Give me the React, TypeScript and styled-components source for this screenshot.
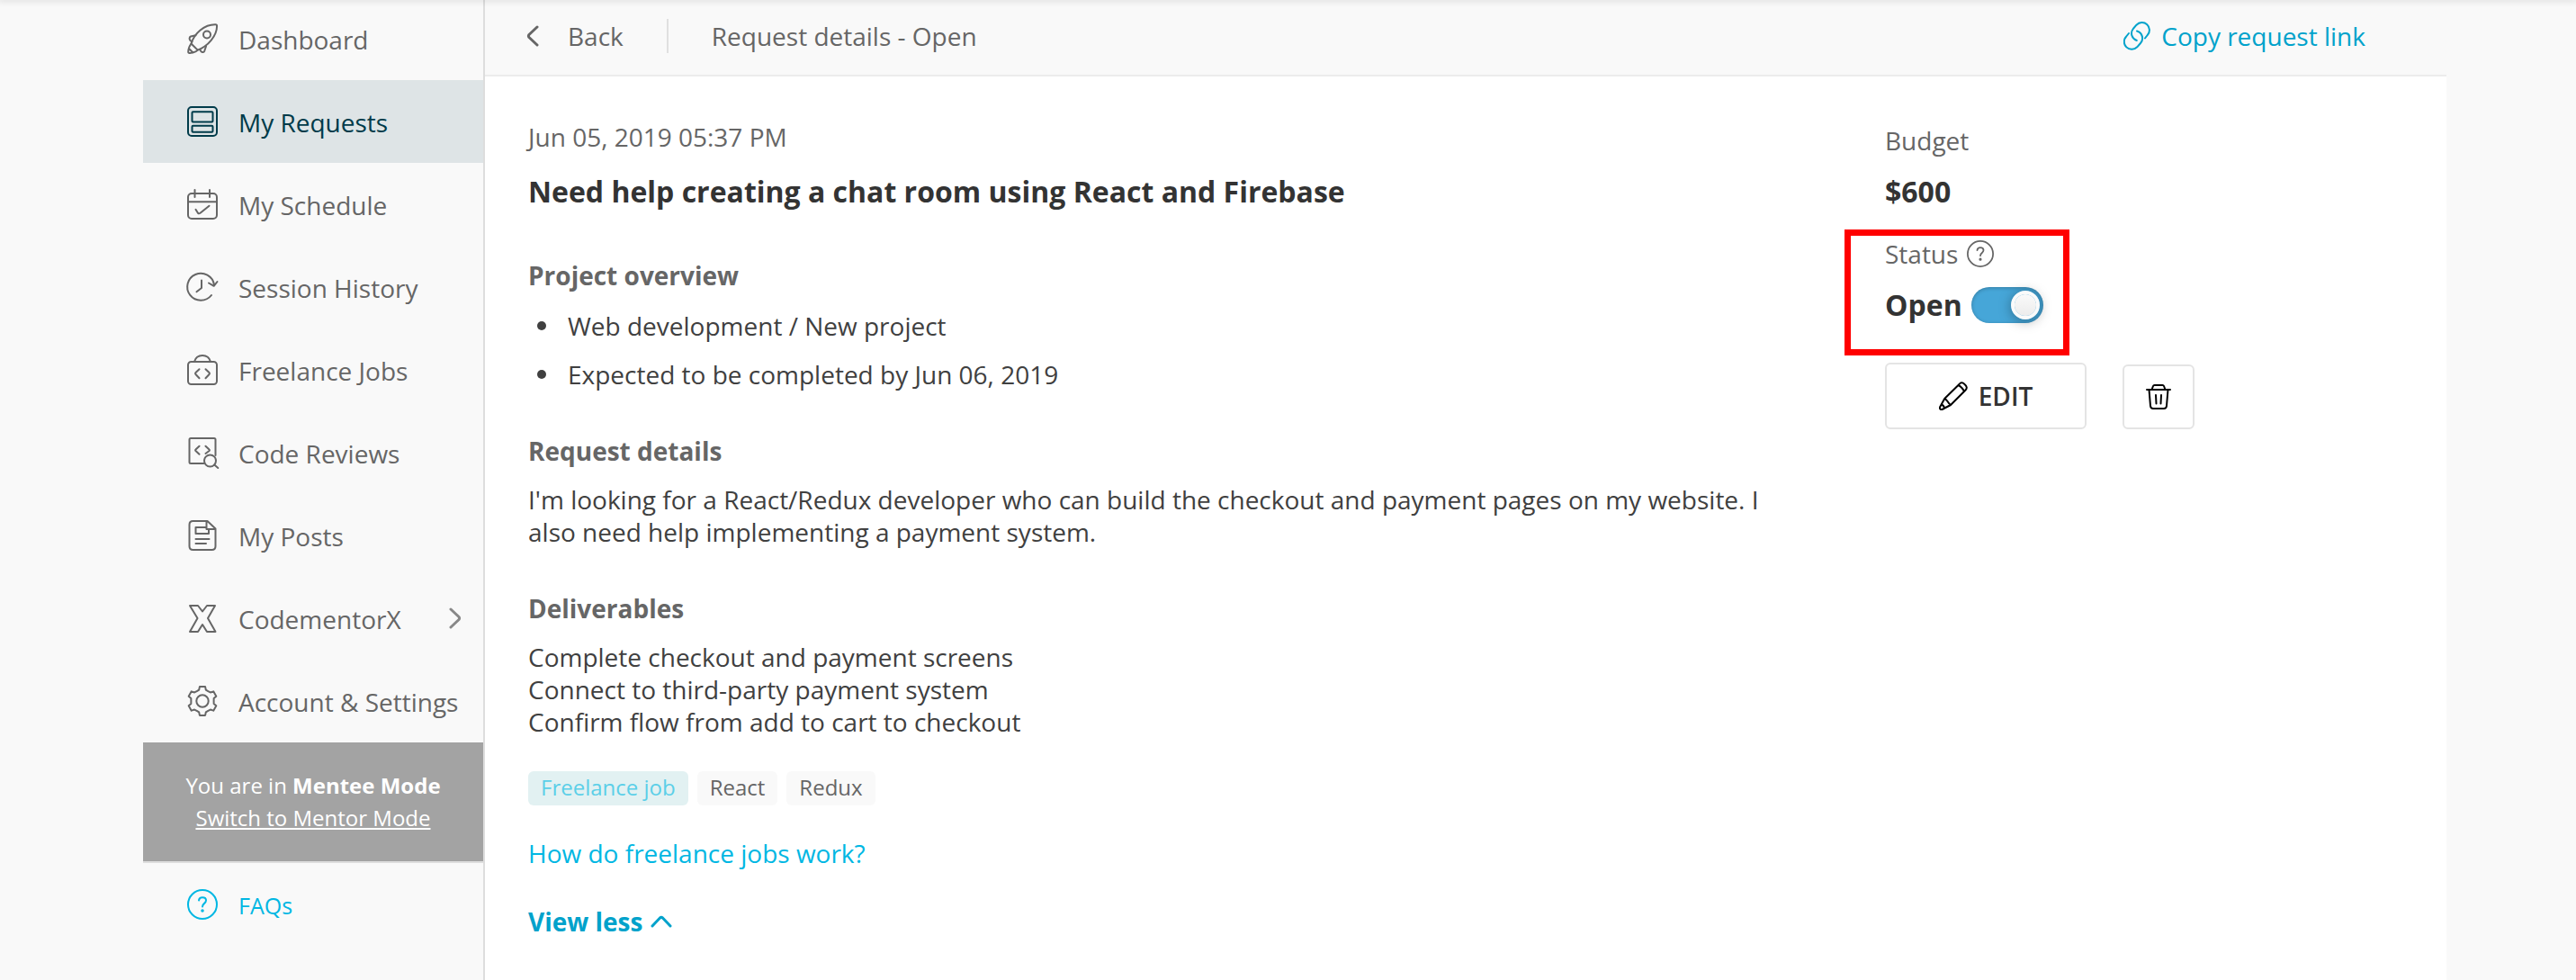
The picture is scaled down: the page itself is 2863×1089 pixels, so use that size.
import React, { useState } from "react";
import styled, { createGlobalStyle, css } from "styled-components";

const color = {
  page: "#f9f9f9",
  line: "#dddddd",
  softLine: "#ececec",
  text: "#666666",
  body: "#404040",
  strong: "#333333",
  active: "#003b4a",
  activeBg: "#dee4e6",
  link: "#00a2cb",
  brightLink: "#00b7e3",
};

const GlobalStyle = createGlobalStyle`
  *, *::before, *::after { box-sizing: border-box; }
  body {
    margin: 0;
    background: ${color.page};
    color: ${color.text};
    font-family: "Open Sans", "Noto Sans", sans-serif;
    font-size: 28px;
    line-height: 36px;
  }
  h1, h2, p, ul { margin: 0; padding: 0; }
  a { text-decoration: none; color: inherit; }
  button { font: inherit; color: inherit; background: none; border: 0; padding: 0; cursor: pointer; }
`;

const Page = styled.div`
  min-height: 100vh;
  padding: 0 0 0 15px;
`;

const TopShadow = styled.div`
  position: fixed;
  top: 0;
  left: 0;
  right: 0;
  height: 0;
  box-shadow: 0 0 6px 2px rgba(0, 0, 0, 0.12);
  z-index: 2;
`;

const Shell = styled.div`
  display: grid;
  grid-template-columns: 380px minmax(0, 1fr);
  max-width: 2560px;
  min-height: 100vh;
  margin: 0 auto;
`;

const Sidebar = styled.aside`
  display: flex;
  flex-direction: column;
  border-right: 2px solid ${color.line};
`;

const Nav = styled.nav`
  display: flex;
  flex-direction: column;
  margin-top: -3px;
`;

const NavItem = styled.a<{ $active?: boolean; $help?: boolean }>`
  display: flex;
  align-items: center;
  gap: 23px;
  height: 92px;
  padding: 0 24px 0 49px;
  white-space: nowrap;
  ${(p) => p.$active && css`
    background: ${color.activeBg};
    color: ${color.active};
  `}
  ${(p) => p.$help && css`
    color: ${color.brightLink};
    font-size: 25px;
  `}
`;

const NavLabel = styled.span`
  padding-top: 2px;
`;

const NavChevron = styled.span`
  display: flex;
  margin-left: auto;
  color: #888888;
`;

const ModeBanner = styled.div`
  padding: 30px 16px;
  background: #a3a3a3;
  color: #ffffff;
  font-size: 24px;
  text-align: center;
`;

const ModeLink = styled.a`
  text-decoration: underline;
  text-decoration-thickness: 2px;
  text-underline-offset: 2px;
  text-decoration-skip-ink: none;
`;

const Help = styled.div`
  border-top: 2px solid ${color.line};
`;

const Main = styled.main`
  display: flex;
  flex-direction: column;
  background: #ffffff;
`;

const Toolbar = styled.header`
  display: flex;
  align-items: center;
  height: 85px;
  padding: 0 90px 3px 46px;
  background: ${color.page};
  border-bottom: 2px solid ${color.softLine};
`;

const BackButton = styled.button`
  display: flex;
  align-items: center;
  gap: 32px;
`;

const Divider = styled.span`
  width: 2px;
  height: 38px;
  margin: 0 48px;
  background: #e0e0e0;
`;

const CopyButton = styled.button`
  display: flex;
  align-items: center;
  gap: 12px;
  margin-left: auto;
  color: ${color.link};
`;

const Content = styled.div`
  display: grid;
  grid-template-columns: minmax(0, 1fr) 576px;
  gap: 120px;
  padding: 49px 48px;
`;

const Details = styled.article`
  display: flex;
  flex-direction: column;
  align-items: flex-start;
`;

const Title = styled.h1`
  margin: 21px 0 4px;
  color: ${color.strong};
  font-size: 32px;
  line-height: 44px;
`;

const Section = styled.section`
  margin-top: 49px;
  color: ${color.body};
`;

const SectionTitle = styled.h2`
  margin-bottom: 18px;
  color: ${color.text};
  font-size: 28px;
`;

const Bullets = styled.ul`
  display: flex;
  flex-direction: column;
  gap: 18px;
  padding: 2px 0 0 10px;
  list-style: none;
`;

const Bullet = styled.li`
  display: flex;
  align-items: center;
  gap: 24px;

  &::before {
    content: "";
    width: 10px;
    height: 10px;
    border-radius: 50%;
    background: currentColor;
  }
`;

const Tags = styled.div`
  display: flex;
  gap: 10px;
  margin-top: 37px;
`;

const Tag = styled.span<{ $accent?: boolean }>`
  height: 38px;
  padding: 0 14px;
  border-radius: 6px;
  background: ${(p) => (p.$accent ? "#e2f1f2" : color.page)};
  color: ${(p) => (p.$accent ? "#5bcfe8" : color.text)};
  font-size: 24px;
`;

const HelpLink = styled.a`
  margin-top: 35px;
  color: ${color.brightLink};
`;

const ViewLess = styled.button`
  display: flex;
  align-items: center;
  gap: 9px;
  margin-top: 40px;
  color: ${color.link};
  font-weight: 700;
`;

const Summary = styled.aside`
  display: flex;
  flex-direction: column;
  padding-top: 4px;
`;

const Caption = styled.div`
  display: flex;
  align-items: center;
  gap: 10px;
`;

const Value = styled.div`
  display: flex;
  align-items: center;
  gap: 10px;
  margin-top: 17px;
  color: ${color.strong};
  font-size: 32px;
  font-weight: 700;
  line-height: 44px;
`;

const StatusBlock = styled.div`
  position: relative;
  margin-top: 29px;
`;

const Highlight = styled.div`
  position: absolute;
  top: -9px;
  left: -45px;
  width: 250px;
  height: 140px;
  border: 7px solid #ff0000;
  pointer-events: none;
`;

const Switch = styled.input`
  appearance: none;
  width: 80px;
  height: 40px;
  margin: 0;
  padding: 4px;
  border-radius: 20px;
  background: #c4c4c4;
  box-shadow: inset 0 1px 4px rgba(0, 0, 0, 0.25);
  cursor: pointer;

  &::before {
    content: "";
    display: block;
    width: 32px;
    height: 32px;
    border: 4px solid #fafafa;
    border-radius: 50%;
    background: linear-gradient(#fafafa, #ececec) padding-box;
    box-shadow: 0 2px 14px rgba(0, 0, 0, 0.35);
  }

  &:checked {
    background: #46a6d8;
  }

  &:checked::before {
    margin-left: 40px;
  }
`;

const Actions = styled.div`
  display: flex;
  align-items: flex-end;
  gap: 40px;
  margin-top: 42px;
`;

const ActionButton = styled.button<{ $compact?: boolean }>`
  display: flex;
  align-items: center;
  justify-content: center;
  gap: 12px;
  width: ${(p) => (p.$compact ? 80 : 224)}px;
  height: ${(p) => (p.$compact ? 72 : 74)}px;
  border: 2px solid #e4e4e4;
  border-radius: 6px;
  background: #ffffff;
  color: ${color.strong};
  font-weight: 600;
`;

const Glyph = styled.svg<{ $tone?: string; $weight?: number }>`
  display: block;
  flex: none;
  fill: none;
  stroke: ${(p) => p.$tone ?? "currentColor"};
  stroke-width: ${(p) => p.$weight ?? 2};
  stroke-linecap: round;
  stroke-linejoin: round;
`;

type IconName =
  | "rocket" | "requests" | "schedule" | "history" | "jobs"
  | "reviews" | "posts" | "codementorx" | "settings" | "help";

/* Six-toothed cog outline around (17, 17). */
function cogPath() {
  const at = (r: number, deg: number) => {
    const a = (deg * Math.PI) / 180;
    return `${(17 + r * Math.cos(a)).toFixed(2)} ${(17 + r * Math.sin(a)).toFixed(2)}`;
  };
  const points: string[] = [];
  for (let i = 0; i < 6; i++) {
    const a = -90 + i * 60;
    points.push(at(13, a - 17), at(16.2, a - 11), at(16.2, a + 11), at(13, a + 17), at(12.6, a + 30));
  }
  return `M${points.join("L")}Z`;
}

const drawings: Record<IconName, React.ReactNode> = {
  rocket: (
    <>
      <path d="M4.5 22.5C8 11 19 1 31.5 1.2c1.3 0 1.6.6 1.6 1.8C33 14 23 25.5 11.7 29.6Z" />
      <circle cx="22" cy="12.5" r="4" />
      <path d="M9.5 13.2 4 14.5c-1.5.6-2 3-.5 4.5l2 1.5M21 25.5l-1.8 5.3c-.6 1.5-2.6 1.7-3.7.4L14 29M4.5 22.5C2.5 25 1.3 28.5 1.2 31.5c0 1.3.6 1.7 1.8 1.5 3.5-.3 6.5-1.2 8.7-3.4M2.500 28.500l4 4" />
    </>
  ),
  requests: (
    <>
      <rect x="1" y="1" width="32" height="32" rx="4" />
      <rect x="5.5" y="6.3" width="23" height="11.2" rx="1" />
      <rect x="5.5" y="21.7" width="23" height="7" rx="1" />
    </>
  ),
  schedule: (
    <>
      <rect x="1" y="5" width="32" height="28" rx="4" />
      <path d="M1 14.2h32M8.5 1v8M25 1v8M9.5 22.8l2.5 4c.8.8 1.7.6 2.5 0L24.5 18.7" />
    </>
  ),
  history: (
    <path d="M30 14.5A15 15 0 1 0 27 26M24 12.5l5.7 3.3L33.5 11M16 9.5V18l-5.5 4.3" />
  ),
  jobs: (
    <>
      <rect x="1" y="8" width="32" height="25" rx="3.5" />
      <path d="M8 8C10.5-1.3 23.5-1.3 26 8M13.5 16.2 9.5 20q-1 1 0 2l4 4.2M20.5 16.2l4 3.8q1 1 0 2l-4 4.2" />
    </>
  ),
  reviews: (
    <>
      <path d="M18.5 29H4q-1.5 0-1.5-1.5v-25Q2.5 1 4 1h26q1.5 0 1.5 1.5V20M13.5 9.7 9.5 13.5q-.8.7 0 1.5l4 3.8M20.5 9.7l4 3.8q.8.7 0 1.5l-4 3" />
      <circle cx="25.5" cy="26" r="6.5" />
      <path d="m30.3 30.5 4 3.5" />
    </>
  ),
  posts: (
    <path d="M22.5 1H6.5Q2.5 1 2.5 5v24q0 4 4 4h21q4 0 4-4V9.5ZM21.5 1v9h10M21.5 8h-12v7H24v-5M9.5 21h15M9.5 26H21" />
  ),
  codementorx: (
    <path d="M3 3h9l5 6.5L22 3h9l-8 14 8.5 15H22l-5-8-5 8H3l8.5-15Z" />
  ),
  settings: (
    <>
      <path d={cogPath()} />
      <circle cx="17" cy="17" r="6.7" />
    </>
  ),
  help: (
    <>
      <circle cx="17" cy="17" r="16" />
      <path d="M13 12.5c.3-2.3 2-3.3 4-3.3 2.3 0 4 1.3 4 3.4 0 3.4-4 3.2-4 6.9" />
      <circle cx="17" cy="24" r=".8" fill="currentColor" />
    </>
  ),
};

const Icon = ({ name, size = 34 }: { name: IconName; size?: number }) => (
  <Glyph width={size} height={size} viewBox="0 0 34 34" overflow="visible" aria-hidden="true">
    {drawings[name]}
  </Glyph>
);

const ChevronLeft = () => (
  <Glyph width="14" height="24" viewBox="0 0 14 24" aria-hidden="true" $weight={3}>
    <path d="M12 2 3 10.5q-1.2 1.5 0 3l9 8.5" />
  </Glyph>
);

const ChevronRight = () => (
  <Glyph width="14" height="24" viewBox="0 0 14 24" aria-hidden="true" $weight={3}>
    <path d="m2 2 9 8.500q1.200 1.500 0 3L2 22" />
  </Glyph>
);

const ChevronUp = ({ flipped }: { flipped: boolean }) => (
  <Glyph width="24" height="14" viewBox="0 0 24 14" aria-hidden="true" $weight={3}>
    <path d={flipped ? "m2 2 8.5 9q1.500 1.200 3 0L22 2" : "m2 12 8.5-9q1.500-1.200 3 0l8.5 9"} />
  </Glyph>
);

const LinkIcon = () => (
  <Glyph width="30" height="32" viewBox="0 0 30 32" aria-hidden="true">
    <path d="M24 18.5 26.7 15A8.3 8.3 0 0 0 14.5 3.7L10.8 8A8.3 8.3 0 0 0 14.8 21" />
    <path d="M6 13 3.2 16.5A8.3 8.3 0 0 0 15.2 28.3L19 24A8.3 8.3 0 0 0 15 10.5" />
  </Glyph>
);

const PencilIcon = () => (
  <Glyph width="32" height="32" viewBox="0 0 32 32" $tone="#000000" aria-hidden="true">
    <path d="M6.2 19 22.5 3Q25-.3 28.5 3q4 3.5 1 6.5L13 26 3.5 31Q.5 31.5 1 28.5ZM6.2 19q2 1 3.3 3 1.5 2.5 3.5 4M21.5 4q2.5 1.3 3.7 2.8 1.6 1.7 2.8 4.2M3 25.5q2 1 3.3 3.7" />
  </Glyph>
);

const TrashIcon = () => (
  <Glyph width="28" height="28" viewBox="0 0 28 28" $tone="#000000" aria-hidden="true">
    <path d="M1 6h26M6.5 6 8 2q.4-1 1.5-1h9q1.1 0 1.5 1l1.5 4M3.5 6l1.5 18q.3 3 3 3h12q2.7 0 3-3L24.5 6M11 12l.5 9.5M17 12l-.5 9.5" />
  </Glyph>
);

const navItems: { label: string; icon: IconName; active?: boolean; more?: boolean }[] = [
  { label: "Dashboard", icon: "rocket" },
  { label: "My Requests", icon: "requests", active: true },
  { label: "My Schedule", icon: "schedule" },
  { label: "Session History", icon: "history" },
  { label: "Freelance Jobs", icon: "jobs" },
  { label: "Code Reviews", icon: "reviews" },
  { label: "My Posts", icon: "posts" },
  { label: "CodementorX", icon: "codementorx", more: true },
  { label: "Account & Settings", icon: "settings" },
];

export default function App() {
  const [open, setOpen] = useState(true);
  const [expanded, setExpanded] = useState(true);

  return (
    <Page>
      <GlobalStyle />
      <TopShadow />
      <Shell>
        <Sidebar>
          <Nav aria-label="Account">
            {navItems.map((item) => (
              <NavItem key={item.label} href="#" $active={item.active} aria-current={item.active ? "page" : undefined}>
                <Icon name={item.icon} />
                <NavLabel>{item.label}</NavLabel>
                {item.more && <NavChevron><ChevronRight /></NavChevron>}
              </NavItem>
            ))}
          </Nav>
          <ModeBanner>
            <div>You are in <strong>Mentee Mode</strong></div>
            <ModeLink href="#">Switch to Mentor Mode</ModeLink>
          </ModeBanner>
          <Help>
            <NavItem href="#" $help>
              <Icon name="help" />
              <NavLabel>FAQs</NavLabel>
            </NavItem>
          </Help>
        </Sidebar>

        <Main>
          <Toolbar>
            <BackButton type="button"><ChevronLeft />Back</BackButton>
            <Divider />
            <span>Request details - Open</span>
            <CopyButton type="button"><LinkIcon />Copy request link</CopyButton>
          </Toolbar>

          <Content>
            <Details>
              <time dateTime="2019-06-05T17:37">Jun 05, 2019 05:37 PM</time>
              <Title>Need help creating a chat room using React and Firebase</Title>
              <Section>
                <SectionTitle>Project overview</SectionTitle>
                <Bullets>
                  <Bullet>Web development / New project</Bullet>
                  <Bullet>Expected to be completed by Jun 06, 2019</Bullet>
                </Bullets>
              </Section>
              {expanded && (
                <>
                  <Section>
                    <SectionTitle>Request details</SectionTitle>
                    <p>
                      I'm looking for a React/Redux developer who can build the checkout and payment pages on my
                      website. I also need help implementing a payment system.
                    </p>
                  </Section>
                  <Section>
                    <SectionTitle>Deliverables</SectionTitle>
                    <p>Complete checkout and payment screens</p>
                    <p>Connect to third-party payment system</p>
                    <p>Confirm flow from add to cart to checkout</p>
                  </Section>
                </>
              )}
              <Tags>
                <Tag $accent>Freelance job</Tag>
                <Tag>React</Tag>
                <Tag>Redux</Tag>
              </Tags>
              <HelpLink href="#">How do freelance jobs work?</HelpLink>
              <ViewLess type="button" aria-expanded={expanded} onClick={() => setExpanded(!expanded)}>
                {expanded ? "View less" : "View more"}
                <ChevronUp flipped={!expanded} />
              </ViewLess>
            </Details>

            <Summary>
              <Caption>Budget</Caption>
              <Value>$600</Value>
              <StatusBlock>
                <Caption>Status <Icon name="help" size={30} /></Caption>
                <Value>
                  <label htmlFor="status">{open ? "Open" : "Closed"}</label>
                  <Switch id="status" type="checkbox" checked={open} onChange={(e) => setOpen(e.target.checked)} />
                </Value>
                <Highlight />
              </StatusBlock>
              <Actions>
                <ActionButton type="button"><PencilIcon />EDIT</ActionButton>
                <ActionButton type="button" $compact aria-label="Delete request"><TrashIcon /></ActionButton>
              </Actions>
            </Summary>
          </Content>
        </Main>
      </Shell>
    </Page>
  );
}
